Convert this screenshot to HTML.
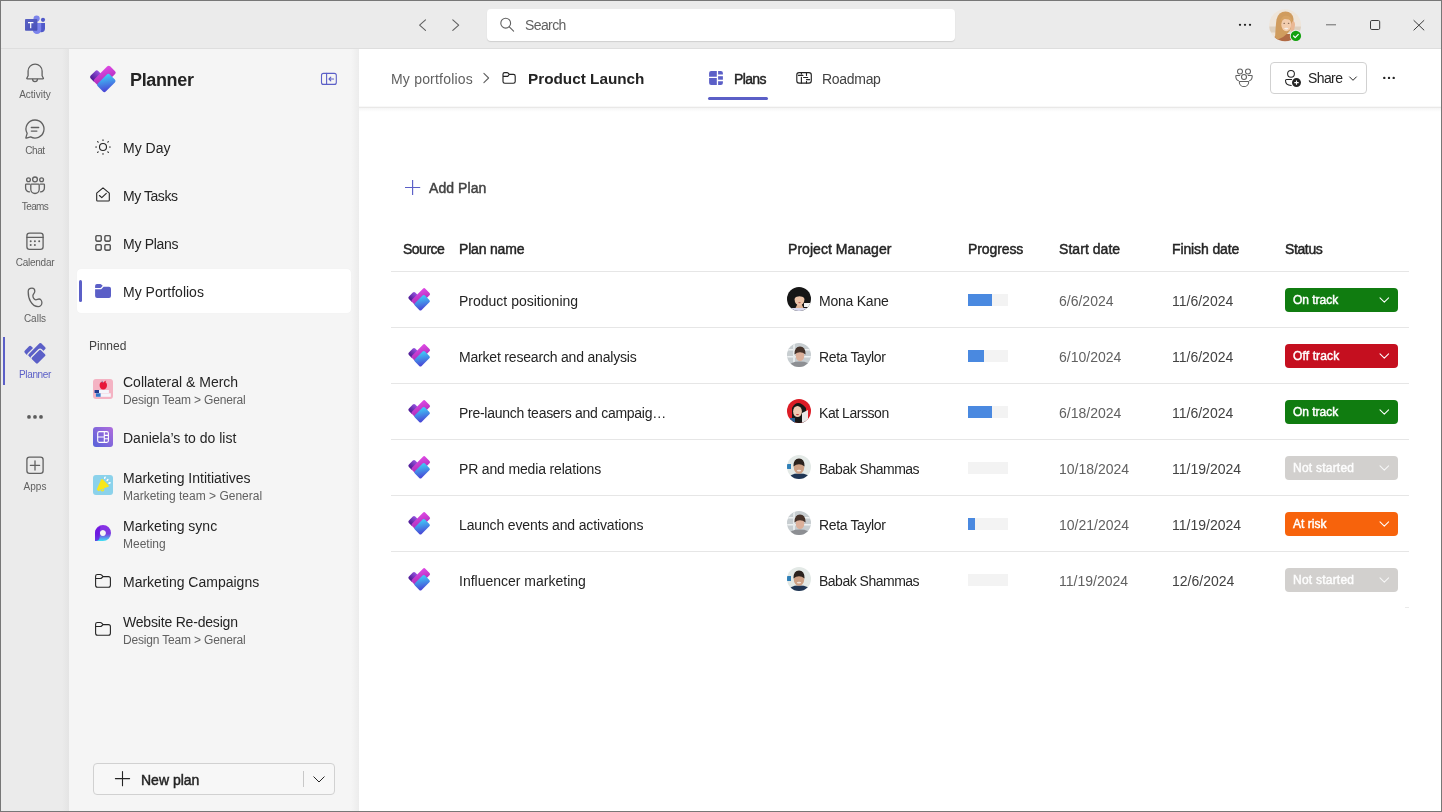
<!DOCTYPE html>
<html><head><meta charset="utf-8">
<style>
*{margin:0;padding:0;box-sizing:border-box}
html,body{width:1442px;height:812px;overflow:hidden;background:#fff;font-family:"Liberation Sans",sans-serif;color:#242424}
.a{position:absolute}
.t{position:absolute;white-space:nowrap;line-height:1;font-size:14px;will-change:transform}
.s12{font-size:12px}
.s10{font-size:10px}
.b{font-weight:bold}
.sb{-webkit-text-stroke:0.45px currentColor}
.g{color:#616161}
#ov{position:absolute;left:0;top:0;width:1442px;height:812px;overflow:visible}
</style></head><body>
<!-- titlebar -->
<div class="a" style="left:0;top:0;width:1442px;height:49px;background:#ebebeb"></div>
<div class="a" style="left:0;top:48px;width:1442px;height:1px;background:#dedede"></div>
<!-- rail -->
<div class="a" style="left:0;top:49px;width:69px;height:763px;background:linear-gradient(90deg,#ebebeb 0,#ebebeb 62px,#e4e4e4 69px)"></div>
<!-- left panel -->
<div class="a" style="left:69px;top:49px;width:290px;height:763px;background:linear-gradient(90deg,#f5f5f5 0,#f5f5f5 282px,#ececec 290px)"></div>
<!-- header shadow -->
<div class="a" style="left:359px;top:106px;width:1083px;height:1px;background:#f8f8f8"></div>
<div class="a" style="left:359px;top:107px;width:1083px;height:1px;background:#e9e8e7"></div>
<div class="a" style="left:359px;top:108px;width:1083px;height:4px;background:linear-gradient(#f5f5f5,#fff)"></div>

<!-- search box -->
<div class="a" style="left:487px;top:9px;width:468px;height:32px;background:#fff;border-radius:4px;box-shadow:0 1px 1px rgba(0,0,0,0.12)"></div>
<div class="t g" style="left:525px;top:18px;letter-spacing:-0.6px">Search</div>

<!-- rail labels -->
<div class="t s10 g" style="left:0;width:70px;text-align:center;top:90px">Activity</div>
<div class="t s10 g" style="left:0;width:70px;text-align:center;top:146px;letter-spacing:-0.43px">Chat</div>
<div class="t s10 g" style="left:0;width:70px;text-align:center;top:202px;letter-spacing:-0.6px">Teams</div>
<div class="t s10 g" style="left:0;width:70px;text-align:center;top:258px;letter-spacing:-0.25px">Calendar</div>
<div class="t s10 g" style="left:0;width:70px;text-align:center;top:314px">Calls</div>
<div class="t s10" style="left:0;width:70px;text-align:center;top:370px;color:#5b5fc7;letter-spacing:-0.35px">Planner</div>
<div class="t s10 g" style="left:0;width:70px;text-align:center;top:482px">Apps</div>
<div class="a" style="left:3px;top:337px;width:2px;height:48px;background:#5b5fc7"></div>

<!-- left panel content -->
<div class="t b" style="left:130px;top:71px;font-size:18px;letter-spacing:-0.35px;color:#242424">Planner</div>
<div class="t" style="left:123px;top:141px">My Day</div>
<div class="t" style="left:123px;top:189px;letter-spacing:-0.45px">My Tasks</div>
<div class="t" style="left:123px;top:237px;letter-spacing:-0.28px">My Plans</div>
<div class="a" style="left:77px;top:269px;width:274px;height:44px;background:#fff;border-radius:4px;box-shadow:0 0 1px rgba(0,0,0,0.06)"></div>
<div class="a" style="left:79px;top:280px;width:3px;height:22px;background:#5b5fc7;border-radius:2px"></div>
<div class="t" style="left:123px;top:285px">My Portfolios</div>
<div class="t s12" style="left:89px;top:340px;color:#424242">Pinned</div>
<div class="t" style="left:123px;top:375px">Collateral &amp; Merch</div>
<div class="t s12 g" style="left:123px;top:394px;letter-spacing:-0.17px">Design Team &gt; General</div>
<div class="t" style="left:123px;top:431px">Daniela’s to do list</div>
<div class="t" style="left:123px;top:471px">Marketing Intitiatives</div>
<div class="t s12 g" style="left:123px;top:490px">Marketing team &gt; General</div>
<div class="t" style="left:123px;top:519px">Marketing sync</div>
<div class="t s12 g" style="left:123px;top:538px">Meeting</div>
<div class="t" style="left:123px;top:575px">Marketing Campaigns</div>
<div class="t" style="left:123px;top:615px;letter-spacing:-0.19px">Website Re-design</div>
<div class="t s12 g" style="left:123px;top:634px;letter-spacing:-0.17px">Design Team &gt; General</div>
<!-- new plan button -->
<div class="a" style="left:93px;top:763px;width:242px;height:32px;border:1px solid #d1d1d1;border-radius:4px;background:#f7f7f7"></div>
<div class="a" style="left:303px;top:771px;width:1px;height:16px;background:#c8c8c8"></div>
<div class="t sb" style="left:141px;top:773px;letter-spacing:-0.002px">New plan</div>

<!-- main header -->
<div class="t g" style="left:391px;top:72px;letter-spacing:0.2px">My portfolios</div>
<div class="t b" style="left:528px;top:71px;font-size:15.3px">Product Launch</div>
<div class="t sb" style="left:734px;top:72px;letter-spacing:-0.63px">Plans</div>
<div class="a" style="left:708px;top:97px;width:60px;height:3px;background:#5b5fc7;border-radius:2px"></div>
<div class="t" style="left:822px;top:72px;letter-spacing:-0.3px;color:#424242">Roadmap</div>
<div class="a" style="left:1270px;top:62px;width:97px;height:32px;border:1px solid #d1d1d1;border-radius:4px;background:#fff"></div>
<div class="t" style="left:1308px;top:71px;letter-spacing:-0.6px">Share</div>

<!-- add plan -->
<div class="t sb" style="left:429px;top:181px;letter-spacing:0.08px;color:#424242">Add Plan</div>

<!-- table header -->
<div class="t sb" style="left:403px;top:242px;letter-spacing:-0.51px">Source</div>
<div class="t sb" style="left:459px;top:242px;letter-spacing:-0.18px">Plan name</div>
<div class="t sb" style="left:788px;top:242px;letter-spacing:0.05px">Project Manager</div>
<div class="t sb" style="left:968px;top:242px;letter-spacing:-0.1px">Progress</div>
<div class="t sb" style="left:1059px;top:242px;letter-spacing:0.05px">Start date</div>
<div class="t sb" style="left:1172px;top:242px;letter-spacing:-0.12px">Finish date</div>
<div class="t sb" style="left:1285px;top:242px;letter-spacing:-0.38px">Status</div>
<div class="a" style="left:391px;top:271px;width:1018px;height:1px;background:#e6e6e6"></div>

<div id="rows">
<div class="t" style="left:459px;top:294px;letter-spacing:0px">Product positioning</div>
<div class="t" style="left:819px;top:294px;letter-spacing:-0.23px">Mona Kane</div>
<div class="a" style="left:968px;top:294px;width:40px;height:12px;background:#f3f3f3"></div>
<div class="a" style="left:968px;top:294px;width:24px;height:12px;background:#4a89e0"></div>
<div class="t g" style="left:1059px;top:294px">6/6/2024</div>
<div class="t" style="left:1172px;top:294px;color:#424242">11/6/2024</div>
<div class="a" style="left:1285px;top:287.5px;width:113px;height:24px;background:#107c10;border-radius:4px"></div>
<div class="t s12 sb" style="left:1293px;top:294px;color:#fff;letter-spacing:-0.03px">On track</div>
<div class="a" style="left:391px;top:327px;width:1018px;height:1px;background:#e6e6e6"></div>
<div class="t" style="left:459px;top:350px;letter-spacing:-0.19px">Market research and analysis</div>
<div class="t" style="left:819px;top:350px;letter-spacing:-0.36px">Reta Taylor</div>
<div class="a" style="left:968px;top:350px;width:40px;height:12px;background:#f3f3f3"></div>
<div class="a" style="left:968px;top:350px;width:16px;height:12px;background:#4a89e0"></div>
<div class="t g" style="left:1059px;top:350px">6/10/2024</div>
<div class="t" style="left:1172px;top:350px;color:#424242">11/6/2024</div>
<div class="a" style="left:1285px;top:343.5px;width:113px;height:24px;background:#c50f1f;border-radius:4px"></div>
<div class="t s12 sb" style="left:1293px;top:350px;color:#fff;letter-spacing:0.13px">Off track</div>
<div class="a" style="left:391px;top:383px;width:1018px;height:1px;background:#e6e6e6"></div>
<div class="t" style="left:459px;top:406px;letter-spacing:-0.28px">Pre-launch teasers and campaig…</div>
<div class="t" style="left:819px;top:406px;letter-spacing:-0.45px">Kat Larsson</div>
<div class="a" style="left:968px;top:406px;width:40px;height:12px;background:#f3f3f3"></div>
<div class="a" style="left:968px;top:406px;width:24px;height:12px;background:#4a89e0"></div>
<div class="t g" style="left:1059px;top:406px">6/18/2024</div>
<div class="t" style="left:1172px;top:406px;color:#424242">11/6/2024</div>
<div class="a" style="left:1285px;top:399.5px;width:113px;height:24px;background:#107c10;border-radius:4px"></div>
<div class="t s12 sb" style="left:1293px;top:406px;color:#fff;letter-spacing:-0.03px">On track</div>
<div class="a" style="left:391px;top:439px;width:1018px;height:1px;background:#e6e6e6"></div>
<div class="t" style="left:459px;top:462px;letter-spacing:-0.16px">PR and media relations</div>
<div class="t" style="left:819px;top:462px;letter-spacing:-0.5px">Babak Shammas</div>
<div class="a" style="left:968px;top:462px;width:40px;height:12px;background:#f3f3f3"></div>
<div class="t g" style="left:1059px;top:462px">10/18/2024</div>
<div class="t" style="left:1172px;top:462px;color:#424242">11/19/2024</div>
<div class="a" style="left:1285px;top:455.5px;width:113px;height:24px;background:#d2d0ce;border-radius:4px"></div>
<div class="t s12 sb" style="left:1293px;top:462px;color:#fdfdfd;letter-spacing:0.23px">Not started</div>
<div class="a" style="left:391px;top:495px;width:1018px;height:1px;background:#e6e6e6"></div>
<div class="t" style="left:459px;top:518px;letter-spacing:-0.14px">Launch events and activations</div>
<div class="t" style="left:819px;top:518px;letter-spacing:-0.36px">Reta Taylor</div>
<div class="a" style="left:968px;top:518px;width:40px;height:12px;background:#f3f3f3"></div>
<div class="a" style="left:968px;top:518px;width:7px;height:12px;background:#4a89e0"></div>
<div class="t g" style="left:1059px;top:518px">10/21/2024</div>
<div class="t" style="left:1172px;top:518px;color:#424242">11/19/2024</div>
<div class="a" style="left:1285px;top:511.5px;width:113px;height:24px;background:#f7630c;border-radius:4px"></div>
<div class="t s12 sb" style="left:1293px;top:518px;color:#fff;letter-spacing:0.03px">At risk</div>
<div class="a" style="left:391px;top:551px;width:1018px;height:1px;background:#e6e6e6"></div>
<div class="t" style="left:459px;top:574px;letter-spacing:0px">Influencer marketing</div>
<div class="t" style="left:819px;top:574px;letter-spacing:-0.5px">Babak Shammas</div>
<div class="a" style="left:968px;top:574px;width:40px;height:12px;background:#f3f3f3"></div>
<div class="t g" style="left:1059px;top:574px">11/19/2024</div>
<div class="t" style="left:1172px;top:574px;color:#424242">12/6/2024</div>
<div class="a" style="left:1285px;top:567.5px;width:113px;height:24px;background:#d2d0ce;border-radius:4px"></div>
<div class="t s12 sb" style="left:1293px;top:574px;color:#fdfdfd;letter-spacing:0.23px">Not started</div>
<div class="a" style="left:1405px;top:607px;width:4px;height:1px;background:#eaeaea"></div>
</div><!--/rows-->

<svg id="ov" width="1442" height="812" viewBox="0 0 1442 812">
<defs>
<linearGradient id="gP" x1="0" y1="0" x2="1" y2="0"><stop offset="0" stop-color="#4c1a93"/><stop offset="1" stop-color="#9553de"/></linearGradient>
<linearGradient id="gM" x1="0" y1="1" x2="1" y2="0"><stop offset="0" stop-color="#a126ad"/><stop offset="1" stop-color="#e04ae6"/></linearGradient>
<linearGradient id="gB" x1="0" y1="1" x2="1" y2="0"><stop offset="0" stop-color="#4a3bd3"/><stop offset="1" stop-color="#3ed6fa"/></linearGradient>
<linearGradient id="gD" x1="0" y1="1" x2="1" y2="0"><stop offset="0" stop-color="#5561d9"/><stop offset="1" stop-color="#b06ddd"/></linearGradient>
<linearGradient id="gL" x1="0" y1="0" x2="0" y2="1"><stop offset="0" stop-color="#8a30e6"/><stop offset="0.55" stop-color="#7b3ae0"/><stop offset="1" stop-color="#3ee3f3"/></linearGradient>
<linearGradient id="gT" x1="0" y1="0" x2="1" y2="1"><stop offset="0" stop-color="#5a62c3"/><stop offset="1" stop-color="#4750b8"/></linearGradient>

<clipPath id="cA1"><circle cx="1285.1" cy="25.3" r="16"/></clipPath>
</defs>

<!-- Teams logo -->
<g>
<path d="M37.7,22.9 H45 V28.6 A3.65,3.65 0 0 1 37.7,28.6 Z" fill="#5059c9"/>
<circle cx="43" cy="19.8" r="2.1" fill="#5059c9"/>
<path d="M32.7,22.9 H41.2 V29.7 A4.25,4.25 0 0 1 32.7,29.7 Z" fill="#7b83eb"/>
<circle cx="36.6" cy="18.5" r="3.1" fill="#7b83eb"/>
<rect x="25" y="19.1" width="12.4" height="11.7" rx="0.8" fill="url(#gT)"/>
<path d="M28,21.9 H33.4 V23.2 H31.3 V28.3 H30.1 V23.2 H28 Z" fill="#fff"/>
</g>

<!-- titlebar controls -->
<g fill="none" stroke="#616161" stroke-width="1.1" stroke-linecap="round" stroke-linejoin="round">
<path d="M425.5,19.8 L419.6,25.1 L425.5,30.4"/>
<path d="M452.8,19.8 L458.7,25.1 L452.8,30.4"/>
<circle cx="505.7" cy="23.2" r="4.9"/>
<path d="M509.3,26.8 L513.6,31.1"/>
</g>
<g fill="#242424"><circle cx="1240" cy="24.8" r="1.15"/><circle cx="1245" cy="24.8" r="1.15"/><circle cx="1250" cy="24.8" r="1.15"/></g>
<g fill="none" stroke="#3a3a3a" stroke-width="1">
<path d="M1326,24.8 H1336" stroke="#6a6a6a"/>
<rect x="1370.5" y="20.5" width="9.2" height="9" rx="1.3"/>
<path d="M1413.6,20.2 L1424.2,30.3 M1424.2,20.2 L1413.6,30.3"/>
</g>
<!-- avatar -->
<g clip-path="url(#cA1)">
<rect x="1268" y="8" width="36" height="36" fill="#eee5da"/>
<rect x="1268" y="26.5" width="36" height="6" fill="#ddd0bf"/>
<path d="M1270,44 Q1273,35 1281,34 L1291,34 Q1298,35 1300,44 Z" fill="#b06a45"/>
<path d="M1275,39 Q1275.5,27 1276.5,19.5 Q1278.5,11.5 1285.5,11.5 Q1292.5,11.5 1293.5,19 L1293,26 L1288,33 Q1283,38 1277,40 Z" fill="#d09c5e"/>
<ellipse cx="1286.3" cy="24.6" rx="5" ry="6.6" fill="#f2cdae"/>
<path d="M1280.5,21.5 Q1281.5,15.5 1286.5,15.8 Q1291.5,16.5 1292,21 Q1288.5,18.8 1284.5,19 Q1282,19.5 1280.5,21.5 Z" fill="#d7a364"/>
<path d="M1290.5,29 Q1291,22 1293,21 Q1295,21.5 1295,25 Q1294.5,31 1291.5,33 Z" fill="#eab894"/>
<ellipse cx="1286.3" cy="28.6" rx="2.1" ry="0.8" fill="#f8f2ec"/>
<ellipse cx="1284.2" cy="23.3" rx="0.8" ry="0.5" fill="#6b5040"/>
<ellipse cx="1288.6" cy="23.3" rx="0.8" ry="0.5" fill="#6b5040"/>
</g>
<circle cx="1295.9" cy="35.9" r="6.1" fill="#ebebeb"/>
<circle cx="1295.9" cy="35.9" r="5.2" fill="#13a10e"/>
<path d="M1293.6,36 L1295.2,37.6 L1298.3,34.4" fill="none" stroke="#fff" stroke-width="1.2" stroke-linecap="round" stroke-linejoin="round"/>

<!-- rail icons -->
<g fill="none" stroke="#616161" stroke-width="1.3" stroke-linecap="round" stroke-linejoin="round">
<path d="M28.1,75.7 V71.1 A7,7 0 0 1 42.1,71.1 V75.7 L43.4,78.2 Q43.6,78.9 42.9,78.9 H27.3 Q26.6,78.9 26.8,78.2 Z"/>
<path d="M32.6,79.3 A2.4,2.4 0 0 0 37.4,79.3"/>
<path d="M35,120 A9,9 0 1 1 30.6,136.85 L26.4,138.1 Q25.7,138.3 25.9,137.6 L27.15,133.4 A9,9 0 0 1 35,120 Z"/>
<path d="M31.3,127.5 H38.7 M31.3,131.1 H36.9"/>
<circle cx="28.5" cy="179.8" r="1.9"/><circle cx="35" cy="179.4" r="2.4"/><circle cx="41.6" cy="179.8" r="1.9"/>
<path d="M31.4,184.2 H38.6 Q39.2,184.2 39.2,184.8 V189.3 A4.2,4.2 0 0 1 30.8,189.3 V184.8 Q30.8,184.2 31.4,184.2 Z"/>
<path d="M29.6,184.2 H26.2 Q25.6,184.2 25.6,184.8 V188 A3.8,3.8 0 0 0 29.6,191.9"/>
<path d="M40.4,184.2 H43.8 Q44.4,184.2 44.4,184.8 V188 A3.8,3.8 0 0 1 40.4,191.9"/>
<rect x="26.9" y="233.2" width="16.2" height="16.1" rx="2.6"/>
<path d="M26.9,237.3 H43.1"/>
<path d="M28.2,291.5 C28.2,289.3 30,288.2 32,288.2 C33.5,288.2 34.8,289.5 34.8,291.2 C34.8,293 33,294 32.9,295.6 C32.8,297.6 34.2,299.8 35.8,299.8 C37.2,299.8 37.7,299 39,299 C40.5,299 41.9,300.8 41.9,302.8 C41.9,305 40,306.6 38.2,306.6 C35,306.6 32,304 30.5,301.4 C29,299 28.2,295.5 28.2,291.5 Z"/>
<rect x="26.9" y="457.2" width="16.2" height="16.1" rx="2.6"/>
<path d="M30.4,465.4 H39.6 M35,460.8 V470"/>
</g>
<g fill="#616161">
<circle cx="30.7" cy="241.2" r="1"/><circle cx="34.9" cy="241.2" r="1"/><circle cx="39.2" cy="241.2" r="1"/>
<circle cx="30.7" cy="245.1" r="1"/><circle cx="34.9" cy="245.1" r="1"/>
<circle cx="29" cy="416.9" r="1.9" fill="#5c5c5c"/><circle cx="35" cy="416.9" r="1.9" fill="#5c5c5c"/><circle cx="41" cy="416.9" r="1.9" fill="#5c5c5c"/>
</g>
<g transform="translate(35.5 353.7) scale(0.86) rotate(-45)" fill="#5b5fc7" stroke="#ebebeb" stroke-width="1.5">
<rect x="-8.2" y="-11.4" width="10.8" height="8.5" rx="2.2" stroke="none"/>
<rect x="-8.2" y="-6" width="22.2" height="11" rx="2.2"/>
<rect x="-8.2" y="-0.6" width="16.3" height="11.2" rx="2.2"/>
</g>

<!-- left panel icons -->
<g transform="translate(103 79)"><g transform="rotate(-45)">
<rect x="-8.3" y="-11.1" width="10.6" height="8.2" rx="2" fill="url(#gP)"/>
<rect x="-8.3" y="-5.9" width="22.3" height="11" rx="2" fill="url(#gM)"/>
<rect x="-8.9" y="-0.5" width="16.9" height="11.3" rx="2" fill="url(#gB)"/>
</g></g>
<g fill="none" stroke="#5b5fc7" stroke-width="1.1" stroke-linecap="round" stroke-linejoin="round">
<rect x="321.5" y="73.4" width="14.8" height="11" rx="2"/>
<path d="M326.6,73.4 V84.4"/>
<path d="M333.6,79 H329 M330.8,77.2 L329,79 L330.8,80.8"/>
</g>
<g fill="none" stroke="#242424" stroke-width="1.1" stroke-linecap="round" stroke-linejoin="round">
<circle cx="103" cy="147" r="3.5"/>
<path d="M103,139.7 V140.5 M103,153.5 V154.3 M95.7,147 H96.5 M109.5,147 H110.3 M97.6,141.6 L98.2,142.2 M108.4,141.6 L107.8,142.2 M97.6,152.4 L98.2,151.8 M108.4,152.4 L107.8,151.8"/>
<path d="M96.7,193.2 L103,187.8 L109.3,193.2 V200.2 Q109.3,201 108.5,201 H97.5 Q96.7,201 96.7,200.2 Z"/>
<path d="M99.4,195.5 L101.8,197.7 L106.3,193.4"/>
<rect x="95.9" y="235.7" width="5.3" height="5.4" rx="0.9"/>
<rect x="104.9" y="235.7" width="5.3" height="5.4" rx="0.9"/>
<rect x="95.9" y="244.7" width="5.3" height="5.4" rx="0.9"/>
<rect x="104.9" y="244.7" width="5.3" height="5.4" rx="0.9"/>
<path d="M95.6,578.5 V576.3 Q95.6,574.5 97.4,574.5 H100.3 Q101.1,574.5 101.7,575.1 L103.1,576.6 H108.4 Q110.4,576.6 110.4,578.6 V585.3 Q110.4,587.3 108.4,587.3 H97.6 Q95.6,587.3 95.6,585.3 Z M95.6,578.5 H100.4 Q101.1,578.5 101.6,578 L103.1,576.6"/>
<path transform="translate(0 48)" d="M95.6,578.5 V576.3 Q95.6,574.5 97.4,574.5 H100.3 Q101.1,574.5 101.7,575.1 L103.1,576.6 H108.4 Q110.4,576.6 110.4,578.6 V585.3 Q110.4,587.3 108.4,587.3 H97.6 Q95.6,587.3 95.6,585.3 Z M95.6,578.5 H100.4 Q101.1,578.5 101.6,578 L103.1,576.6"/>
<path d="M115.4,778.6 H129.6 M122.5,771.5 V785.7"/>
<path d="M313.8,776.8 L319,782 L324.2,776.8" stroke-width="1"/>
</g>
<g fill="#5b5fc7">
<path d="M95.1,288.1 V285.9 Q95.1,284.1 96.9,284.1 H100.2 Q101,284.1 101.6,284.7 L102.7,285.8 L100.9,287.7 Q100.5,288.1 99.9,288.1 Z"/>
<path d="M95.1,289.2 H100.5 Q101.2,289.2 101.7,288.7 L103.6,286.7 H109 Q111,286.7 111,288.7 V295.9 Q111,297.9 109,297.9 H97.1 Q95.1,297.9 95.1,295.9 Z"/>
</g>
<!-- pinned icons -->
<rect x="93" y="379" width="20" height="20" rx="3" fill="#f4b3c3"/>
<path d="M94.5,390 H108.9 V393 H94.5 Z" fill="#f4f6fb"/>
<path d="M94.5,390 H99 V393 H94.5 Z" fill="#24398e"/>
<path d="M95.9,393.3 H110.8 V396.8 H95.9 Z" fill="#f4f6fb"/>
<path d="M95.9,393.3 H100.6 V396.8 H95.9 Z" fill="#2f75c9"/>
<path d="M103.3,382.6 C101,381.2 99.6,383 99.6,385.3 C99.6,388 101.3,389.8 103.3,389.6 C105.3,389.8 107,388 107,385.3 C107,383 105.6,381.2 103.3,382.6 Z" fill="#e8173a"/>
<path d="M102.5,382.8 L102,380.8" stroke="#7a5a8a" stroke-width="0.8"/>
<path d="M103.8,382.3 Q104.5,380.5 106.3,380.8 Q105.5,382.5 103.8,382.3 Z" fill="#e8173a"/>
<rect x="93" y="427" width="20" height="20" rx="3" fill="url(#gD)"/>
<g fill="none" stroke="#fff" stroke-width="1.1">
<rect x="97.7" y="431.6" width="10.7" height="10.8" rx="1.6"/>
<path d="M104.3,431.6 V442.4 M97.7,437 H104.3 M104.3,435.4 H108.4 M104.3,438.7 H108.4"/>
</g>
<rect x="93" y="475" width="20" height="20" rx="3" fill="#8bd2eb"/>
<path d="M101.3,479.3 Q102.1,478.6 102.9,479.4 L108.7,485.5 Q109.2,486.4 108.3,486.8 L97.9,490.2 Q96.6,490.5 96.8,489.3 Z" fill="#f8e71c"/>
<circle cx="102.4" cy="489.6" r="1.35" fill="none" stroke="#f8e71c" stroke-width="1.1"/>
<path d="M97,489 L98.6,491.2 L100.2,490.4 Z" fill="#f8e71c"/>
<g fill="#fff"><ellipse cx="104.9" cy="477.7" rx="0.8" ry="1.35" transform="rotate(25 104.9 477.7)"/><ellipse cx="107.5" cy="480" rx="0.8" ry="1.35" transform="rotate(40 107.5 480)"/><ellipse cx="109.5" cy="483" rx="0.8" ry="1.4" transform="rotate(65 109.5 483)"/></g>
<path fill-rule="evenodd" d="M95,541 V533 A8,8 0 1 1 103,541 Z M102.9,530 A3,3 0 1 0 102.91,530 Z" fill="url(#gL)"/>
<path d="M95,541 V533 Q95,528 100.5,526.5 Q99.5,530 99.8,533.5 Q100,537.5 99,539.5 Q97.5,541 95,541 Z" fill="#6a12e0" opacity="0.8"/>

<!-- header icons -->
<g fill="none" stroke="#616161" stroke-width="1.1" stroke-linecap="round" stroke-linejoin="round">
<path d="M483.9,73.4 L488.6,78 L483.9,82.6"/>
</g>
<g fill="none" stroke="#242424" stroke-width="1.15" stroke-linecap="round" stroke-linejoin="round">
<path d="M503,76.4 V74.3 Q503,72.6 504.7,72.6 H507 Q507.7,72.6 508.2,73.1 L509.3,74.4 H513.4 Q515.2,74.4 515.2,76.2 V81.5 Q515.2,83.2 513.4,83.2 H504.8 Q503,83.2 503,81.5 Z M503,76.4 H507.1 Q507.7,76.4 508.1,76 L509.3,74.4"/>
<rect x="796.8" y="72.6" width="14.5" height="10.5" rx="2.3"/>
<path d="M801.4,72.6 V73.9 M798.4,75.4 H802.9 M801.4,77.3 V83.1 M806.5,72.6 V75.4 M803.6,77.5 H807.7 M806.5,79.6 H809.7 M806.5,81.4 V83.1"/>
<circle cx="1291" cy="73.8" r="3.4" stroke-width="1.05"/>
<path d="M1291.6,79.5 H1286.6 Q1285.5,79.5 1285.5,80.6 Q1285.5,85.3 1291.2,85.4" stroke-width="1.05"/>
<path d="M1349.6,76.9 L1353,80.3 L1356.4,76.9" stroke-width="1"/>
</g>
<circle cx="1296.5" cy="82.6" r="4.5" fill="#242424"/>
<path d="M1296.5,80.4 V84.8 M1294.3,82.6 H1298.7" stroke="#fff" stroke-width="1.1"/>
<g fill="#242424"><circle cx="1384.3" cy="77.9" r="1.2"/><circle cx="1389" cy="77.9" r="1.2"/><circle cx="1393.7" cy="77.9" r="1.2"/></g>
<g fill="#5b5fc7">
<path d="M711.1,70.9 H716.8 V76.7 H709.1 V72.9 Q709.1,70.9 711.1,70.9 Z"/>
<path d="M709.1,78.1 H716.8 V84.9 H711.1 Q709.1,84.9 709.1,82.9 Z"/>
<path d="M718.1,71.1 H720.9 Q722.9,71.1 722.9,73.1 V74.6 H718.1 Z"/>
<rect x="718.1" y="76.2" width="4.8" height="3.5"/>
<path d="M718.1,81.2 H722.9 V82.9 Q722.9,84.9 720.9,84.9 H718.1 Z"/>
</g>
<g fill="none" stroke="#616161" stroke-width="1.05" stroke-linecap="round" stroke-linejoin="round">
<circle cx="1240" cy="71.4" r="2.5"/><circle cx="1248" cy="71.4" r="2.5"/><circle cx="1244" cy="77" r="2.5"/>
<path d="M1239.8,75.5 H1236.4 Q1235.8,75.5 1235.8,76.1 Q1235.8,80.2 1238.5,80.7"/>
<path d="M1248.2,75.5 H1251.6 Q1252.2,75.5 1252.2,76.1 Q1252.2,80.2 1249.5,80.7"/>
<path d="M1239.8,81.4 H1248.2 Q1248.7,81.4 1248.7,81.9 A4.7,4.7 0 0 1 1239.3,81.9 Q1239.3,81.4 1239.8,81.4 Z"/>
</g>
<!-- add plan plus -->
<path d="M405,187.5 H420.2 M412.6,180 V195" stroke="#5b5fc7" stroke-width="1.15" fill="none"/>

<g transform="translate(419.3 299.4) scale(0.846)"><g transform="rotate(-45)">
<rect x="-8.3" y="-11.1" width="10.6" height="8.2" rx="2" fill="url(#gP)"/>
<rect x="-8.3" y="-5.9" width="22.3" height="11" rx="2" fill="url(#gM)"/>
<rect x="-8.9" y="-0.5" width="16.9" height="11.3" rx="2" fill="url(#gB)"/>
</g></g>
<clipPath id="cav0"><circle cx="799" cy="299" r="12"/></clipPath>
<g clip-path="url(#cav0)"><rect x="787" y="287" width="24" height="24" fill="#161616"/>
<path d="M804,303 L811,303 L811,307 L804,307 Z" fill="#f3f3f3"/>
<rect x="787" y="308" width="24" height="3" fill="#d9d9ee"/>
<path d="M797.5,304 L801.5,304 L803.5,308 L795.5,308 Z" fill="#e0b497"/>
<ellipse cx="799.5" cy="299.5" rx="4.9" ry="6" fill="#ebc3a8"/>
<path d="M793.9,298.5 Q793.9,290.5 799.5,290.5 Q805.1,290.5 805.1,298.5 Q799.5,294 793.9,298.5 Z" fill="#161616"/>
<ellipse cx="799.5" cy="302.6" rx="1.3" ry="0.6" fill="#c2655e"/></g>
<path d="M1380,297.9 L1384.3,302.2 L1388.6,297.9" fill="none" stroke="#fff" stroke-width="1.05" stroke-linecap="round" stroke-linejoin="round"/>
<g transform="translate(419.3 355.4) scale(0.846)"><g transform="rotate(-45)">
<rect x="-8.3" y="-11.1" width="10.6" height="8.2" rx="2" fill="url(#gP)"/>
<rect x="-8.3" y="-5.9" width="22.3" height="11" rx="2" fill="url(#gM)"/>
<rect x="-8.9" y="-0.5" width="16.9" height="11.3" rx="2" fill="url(#gB)"/>
</g></g>
<clipPath id="cav1"><circle cx="799" cy="355" r="12"/></clipPath>
<g clip-path="url(#cav1)"><rect x="787" y="343" width="24" height="24" fill="#c7cdd0"/>
<rect x="787" y="349" width="24" height="1.5" fill="#eef1f2"/>
<rect x="787" y="356" width="24" height="1.5" fill="#eef1f2"/>
<rect x="793" y="343" width="2" height="24" fill="#e6eaeb"/>
<path d="M789,367 Q789,361.5 800,361.5 Q810,361.5 810,367 Z" fill="#8d8f93"/>
<ellipse cx="800" cy="355.5" rx="4.3" ry="5.5" fill="#dcb09a"/>
<path d="M794.4,354.5 Q794.4,346.5 800,346.5 Q805.6,346.5 805.6,354.5 Q800,350 794.4,354.5 Z" fill="#463229"/></g>
<path d="M1380,353.9 L1384.3,358.2 L1388.6,353.9" fill="none" stroke="#fff" stroke-width="1.05" stroke-linecap="round" stroke-linejoin="round"/>
<g transform="translate(419.3 411.4) scale(0.846)"><g transform="rotate(-45)">
<rect x="-8.3" y="-11.1" width="10.6" height="8.2" rx="2" fill="url(#gP)"/>
<rect x="-8.3" y="-5.9" width="22.3" height="11" rx="2" fill="url(#gM)"/>
<rect x="-8.9" y="-0.5" width="16.9" height="11.3" rx="2" fill="url(#gB)"/>
</g></g>
<clipPath id="cav2"><circle cx="799" cy="411" r="12"/></clipPath>
<g clip-path="url(#cav2)"><rect x="787" y="399" width="24" height="24" fill="#dc1c26"/>
<path d="M792,423 L792,408 Q797.5,398 806,408 L806,423 Z" fill="#181818"/>
<ellipse cx="797.5" cy="411.5" rx="4.4" ry="5.6" fill="#efc9b3"/>
<path d="M802,423 L802,413 L808,410 L808,423 Z" fill="#e8e6e6"/>
<path d="M790,423 L790,418 L795,418 L795,423 Z" fill="#2c5e8f"/>
<ellipse cx="797.5" cy="414.6" rx="1.6" ry="0.7" fill="#c04040"/></g>
<path d="M1380,409.9 L1384.3,414.2 L1388.6,409.9" fill="none" stroke="#fff" stroke-width="1.05" stroke-linecap="round" stroke-linejoin="round"/>
<g transform="translate(419.3 467.4) scale(0.846)"><g transform="rotate(-45)">
<rect x="-8.3" y="-11.1" width="10.6" height="8.2" rx="2" fill="url(#gP)"/>
<rect x="-8.3" y="-5.9" width="22.3" height="11" rx="2" fill="url(#gM)"/>
<rect x="-8.9" y="-0.5" width="16.9" height="11.3" rx="2" fill="url(#gB)"/>
</g></g>
<clipPath id="cav3"><circle cx="799" cy="467" r="12"/></clipPath>
<g clip-path="url(#cav3)"><rect x="787" y="455" width="24" height="24" fill="#e3e9e6"/>
<rect x="787" y="464" width="4" height="5" fill="#2f80b8"/>
<path d="M789,479 Q789,473.5 799,473.5 Q810,473.5 810,479 Z" fill="#1f3554"/>
<ellipse cx="799" cy="467.5" rx="5.2" ry="6.3" fill="#cda084"/>
<path d="M793.4,466.5 Q793.4,458.5 799,458.5 Q804.6,458.5 804.6,466.5 Q799,462 793.4,466.5 Z" fill="#2b221d"/>
<ellipse cx="799" cy="470.6" rx="2.2" ry="0.9" fill="#efe3dc"/></g>
<path d="M1380,465.9 L1384.3,470.2 L1388.6,465.9" fill="none" stroke="#f7f7f7" stroke-width="1.05" stroke-linecap="round" stroke-linejoin="round"/>
<g transform="translate(419.3 523.4) scale(0.846)"><g transform="rotate(-45)">
<rect x="-8.3" y="-11.1" width="10.6" height="8.2" rx="2" fill="url(#gP)"/>
<rect x="-8.3" y="-5.9" width="22.3" height="11" rx="2" fill="url(#gM)"/>
<rect x="-8.9" y="-0.5" width="16.9" height="11.3" rx="2" fill="url(#gB)"/>
</g></g>
<clipPath id="cav4"><circle cx="799" cy="523" r="12"/></clipPath>
<g clip-path="url(#cav4)"><rect x="787" y="511" width="24" height="24" fill="#c7cdd0"/>
<rect x="787" y="517" width="24" height="1.5" fill="#eef1f2"/>
<rect x="787" y="524" width="24" height="1.5" fill="#eef1f2"/>
<rect x="793" y="511" width="2" height="24" fill="#e6eaeb"/>
<path d="M789,535 Q789,529.5 800,529.5 Q810,529.5 810,535 Z" fill="#8d8f93"/>
<ellipse cx="800" cy="523.5" rx="4.3" ry="5.5" fill="#dcb09a"/>
<path d="M794.4,522.5 Q794.4,514.5 800,514.5 Q805.6,514.5 805.6,522.5 Q800,518 794.4,522.5 Z" fill="#463229"/></g>
<path d="M1380,521.9 L1384.3,526.2 L1388.6,521.9" fill="none" stroke="#fff" stroke-width="1.05" stroke-linecap="round" stroke-linejoin="round"/>
<g transform="translate(419.3 579.4) scale(0.846)"><g transform="rotate(-45)">
<rect x="-8.3" y="-11.1" width="10.6" height="8.2" rx="2" fill="url(#gP)"/>
<rect x="-8.3" y="-5.9" width="22.3" height="11" rx="2" fill="url(#gM)"/>
<rect x="-8.9" y="-0.5" width="16.9" height="11.3" rx="2" fill="url(#gB)"/>
</g></g>
<clipPath id="cav5"><circle cx="799" cy="579" r="12"/></clipPath>
<g clip-path="url(#cav5)"><rect x="787" y="567" width="24" height="24" fill="#e3e9e6"/>
<rect x="787" y="576" width="4" height="5" fill="#2f80b8"/>
<path d="M789,591 Q789,585.5 799,585.5 Q810,585.5 810,591 Z" fill="#1f3554"/>
<ellipse cx="799" cy="579.5" rx="5.2" ry="6.3" fill="#cda084"/>
<path d="M793.4,578.5 Q793.4,570.5 799,570.5 Q804.6,570.5 804.6,578.5 Q799,574 793.4,578.5 Z" fill="#2b221d"/>
<ellipse cx="799" cy="582.6" rx="2.2" ry="0.9" fill="#efe3dc"/></g>
<path d="M1380,577.9 L1384.3,582.2 L1388.6,577.9" fill="none" stroke="#f7f7f7" stroke-width="1.05" stroke-linecap="round" stroke-linejoin="round"/>
</svg>

<!-- window border -->
<div class="a" style="left:0;top:0;width:1442px;height:1px;background:#777777"></div>
<div class="a" style="left:0;top:811px;width:1442px;height:1px;background:#777777"></div>
<div class="a" style="left:0;top:0;width:1px;height:812px;background:#777777"></div>
<div class="a" style="left:1441px;top:0;width:1px;height:812px;background:#777777"></div>
</body></html>
